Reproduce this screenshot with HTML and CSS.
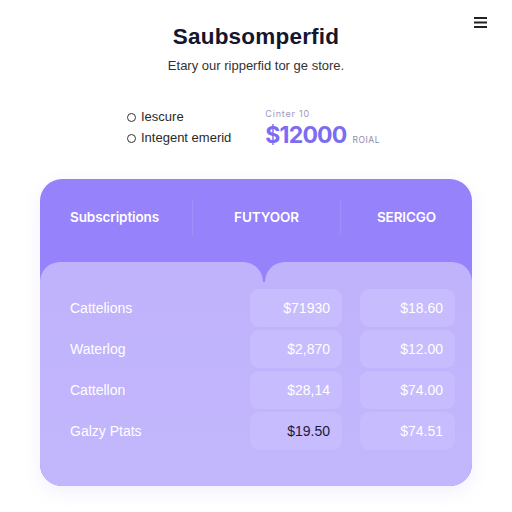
FILE: index.html
```html
<!DOCTYPE html>
<html lang="en">
<head>
<meta charset="utf-8">
<title>Saubsomperfid</title>
<link rel="stylesheet" href="styles.css">
</head>
<body>
<header class="top">
  <div class="spacer"></div>
  <h1 class="title">Saubsomperfid</h1>
  <button class="menu" aria-label="Menu">
    <svg width="14" height="11" viewBox="0 0 14 11"><rect x="0" y="0" width="13" height="2" fill="#222"/><rect x="0" y="4.5" width="13" height="2" fill="#222"/><rect x="0" y="9" width="13" height="2" fill="#222"/></svg>
  </button>
</header>
<p class="subtitle">Etary our ripperfid tor ge store.</p>

<section class="info">
  <ul class="opts">
    <li><span class="ring"></span>Iescure</li>
    <li><span class="ring"></span>Integent emerid</li>
  </ul>
  <div class="total">
    <div class="total-label">Cinter 10</div>
    <div class="total-value"><span class="amount">$12000</span><span class="unit">ROIAL</span></div>
  </div>
</section>

<section class="card">
  <div class="card-head">
    <div class="hcell">Subscriptions</div>
    <div class="hcell">FUTYOOR</div>
    <div class="hcell">SERICGO</div>
  </div>
  <div class="tabs">
    <div class="tab tab-left"></div>
    <div class="tab tab-right"></div>
  </div>
  <div class="panel">
    <div class="row"><span class="label">Cattelions</span><span class="cell">$71930</span><span class="cell">$18.60</span></div>
    <div class="row"><span class="label">Waterlog</span><span class="cell">$2,870</span><span class="cell">$12.00</span></div>
    <div class="row"><span class="label">Cattellon</span><span class="cell">$28,14</span><span class="cell">$74.00</span></div>
    <div class="row"><span class="label">Galzy Ptats</span><span class="cell dark">$19.50</span><span class="cell">$74.51</span></div>
  </div>
</section>
</body>
</html>
```

FILE: styles.css
```css
* { box-sizing: border-box; }
html, body { margin: 0; padding: 0; background: #ffffff; }
body {
  width: 512px;
  height: 512px;
  overflow: hidden;
  font-family: "Inter", "Liberation Sans", sans-serif;
  color: #222;
}
.top {
  display: grid;
  grid-template-columns: 1fr auto 1fr;
  align-items: start;
  padding: 17px 25px 0 25px;
}
.title {
  margin: 7px 0 0 0;
  font-family: "Liberation Sans", Arial, sans-serif;
  font-weight: 700;
  font-size: 22.5px;
  line-height: 26px;
  color: #15152e;
  letter-spacing: 0.2px;
}
.menu {
  justify-self: end;
  border: 0;
  background: none;
  padding: 0;
  margin: 0;
  width: 13px;
  height: 11px;
  display: block;
}
.menu svg { display: block; }
.subtitle {
  margin: 8px 0 0 0;
  text-align: center;
  font-family: "Liberation Sans", Arial, sans-serif;
  font-size: 13px;
  line-height: 16px;
  color: #333;
}
.info {
  display: flex;
  align-items: flex-start;
  padding: 35px 0 0 127px;
  gap: 34px;
}
.opts {
  list-style: none;
  margin: 0;
  padding: 0;
  display: flex;
  flex-direction: column;
  gap: 5px;
}
.opts li {
  display: flex;
  align-items: center;
  gap: 5px;
  font-family: "Liberation Sans", Arial, sans-serif;
  font-size: 13px;
  line-height: 16px;
  color: #2a2a2a;
}
.ring {
  width: 9px;
  height: 9px;
  border: 1.3px solid #333;
  border-radius: 50%;
  display: inline-block;
}
.total { display: flex; flex-direction: column; margin-top: -1px; }
.total-label {
  font-size: 9px;
  line-height: 12px;
  color: #9d98ba;
  letter-spacing: 0.8px;
}
.total-value { display: flex; align-items: baseline; gap: 6px; margin-top: 1px; }
.amount {
  font-family: "Inter", sans-serif;
  font-weight: 700;
  font-size: 23px;
  line-height: 28px;
  color: #7b6cf0;
  letter-spacing: -0.8px;
}
.unit {
  font-size: 8.5px;
  color: #8f8aad;
  letter-spacing: 0.5px;
}
.card {
  margin: 30px 40px 0 40px;
  height: 307px;
  border-radius: 22px;
  background: #9682fb;
  overflow: hidden;
  display: flex;
  flex-direction: column;
  box-shadow: 0 6px 18px rgba(150, 130, 250, 0.12);
}
.card-head {
  display: grid;
  grid-template-columns: 152px 148px 1fr;
  height: 83px;
  padding-top: 20px;
  align-items: start;
}
.hcell {
  height: 36px;
  display: flex;
  align-items: center;
  justify-content: center;
  color: #ffffff;
  font-family: "Inter", sans-serif;
  font-weight: 600;
  font-size: 13.5px;
  letter-spacing: -0.1px;
}
.hcell:first-child { justify-content: flex-start; padding-left: 30px; }
.hcell + .hcell { border-left: 1px solid rgba(255, 255, 255, 0.10); }
.tabs {
  display: flex;
  gap: 2px;
  height: 20px;
}
.tab {
  background: #c0b3fc;
  border-radius: 20px 20px 0 0;
}
.tab-left { width: 223px; }
.tab-right { flex: 1; }
.panel {
  flex: 1;
  background: linear-gradient(180deg, #c0b3fc 0%, #c2b6fc 100%);
  padding: 7px 17px 0 30px;
  display: flex;
  flex-direction: column;
  gap: 3px;
}
.row {
  display: grid;
  grid-template-columns: 1fr 92px 95px;
  column-gap: 18px;
  align-items: center;
  height: 38px;
}
.label {
  color: #ffffff;
  font-family: "Liberation Sans", Arial, sans-serif;
  font-size: 14px;
}
.cell {
  height: 38px;
  border-radius: 9px;
  background: #c7bcfd;
  display: flex;
  align-items: center;
  justify-content: flex-end;
  padding-right: 12px;
  color: #ffffff;
  font-family: "Liberation Sans", Arial, sans-serif;
  font-size: 14px;
}
.cell.dark { color: #1d1a36; }
```
